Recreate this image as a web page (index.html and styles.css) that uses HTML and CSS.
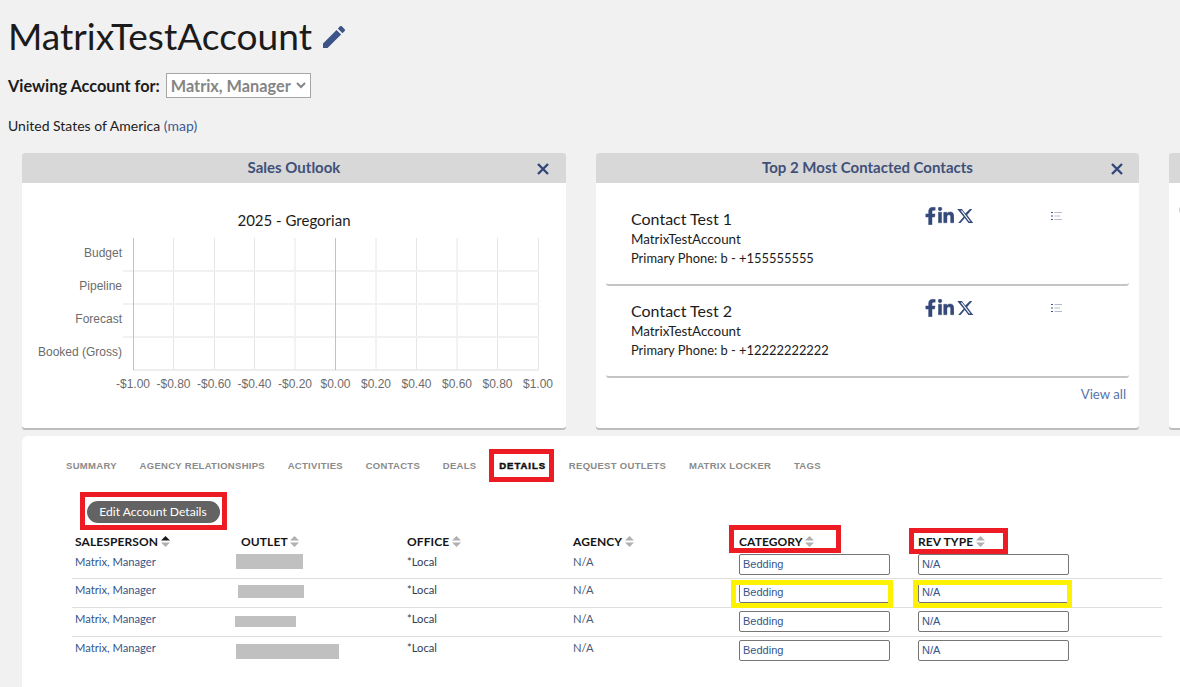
FILE: index.html
```html
<!DOCTYPE html>
<html lang="en">
<head>
<meta charset="utf-8">
<title>MatrixTestAccount</title>
<link rel="stylesheet" href="styles.css">
</head>
<body>
<div class="page">
  <header class="head">
    <div class="title-row">
      <h1 class="title">MatrixTestAccount</h1>
      <svg class="pencil" viewBox="3 3 18 18"><path d="M3 17.25V21h3.75L17.81 9.94l-3.75-3.75L3 17.25zM20.71 7.04c.39-.39.39-1.02 0-1.41l-2.34-2.34c-.39-.39-1.02-.39-1.41 0l-1.83 1.83 3.75 3.75 1.83-1.83z"/></svg>
    </div>
    <div class="viewing">
      <span class="viewing-label">Viewing Account for:</span>
      <div class="fake-select">
        <span>Matrix, Manager</span>
        <svg class="chev" viewBox="0 0 10 7"><path d="M1 1l4 4 4-4"/></svg>
      </div>
    </div>
    <p class="country">United States of America <a class="map">(map)</a></p>
  </header>

  <section class="cards">
    <article class="card">
      <div class="card-head">
        <h2 class="card-title">Sales Outlook</h2>
        <svg class="close" viewBox="0 0 12 12"><path d="M1 1l10 10M11 1L1 11"/></svg>
      </div>
      <svg class="chart" viewBox="0 0 544 246" width="544" height="246">
        <text class="chart-title" x="272" y="43">2025 - Gregorian</text>
        <g class="grid-v">
          <path d="M151.5 55v131M192.5 55v131M232.5 55v131M273 55v131M354 55v131M394.5 55v131M435 55v131M475.5 55v131M516.5 55v131"/>
        </g>
        <g class="grid-h"><path d="M101 88h416M101 121h416M101 154h416"/></g>
        <path class="axis-base" d="M111 187h406"/>
        <path class="axis-zero" d="M111.5 55v132M313.5 55v132"/>
        <g class="cat">
          <text x="100" y="74">Budget</text>
          <text x="100" y="107">Pipeline</text>
          <text x="100" y="140">Forecast</text>
          <text x="100" y="173">Booked (Gross)</text>
        </g>
        <g class="val">
          <text x="111" y="205">-$1.00</text>
          <text x="151.5" y="205">-$0.80</text>
          <text x="192" y="205">-$0.60</text>
          <text x="232.5" y="205">-$0.40</text>
          <text x="273" y="205">-$0.20</text>
          <text x="313.5" y="205">$0.00</text>
          <text x="354" y="205">$0.20</text>
          <text x="394.5" y="205">$0.40</text>
          <text x="435" y="205">$0.60</text>
          <text x="475.5" y="205">$0.80</text>
          <text x="516" y="205">$1.00</text>
        </g>
      </svg>
    </article>

    <article class="card card-contacts">
      <div class="card-head">
        <h2 class="card-title">Top 2 Most Contacted Contacts</h2>
        <svg class="close" viewBox="0 0 12 12"><path d="M1 1l10 10M11 1L1 11"/></svg>
      </div>
      <div class="contacts">
        <div class="contact">
          <div class="contact-info">
            <div class="contact-name">Contact Test 1</div>
            <div class="contact-line">MatrixTestAccount</div>
            <div class="contact-line contact-phone">Primary Phone: b - +155555555</div>
          </div>
          <div class="socials">
            <svg class="ic-f" viewBox="0 0 320 512"><path d="M279.14 288l14.22-92.66h-88.91v-60.13c0-25.35 12.42-50.06 52.24-50.06h40.42V6.26S260.43 0 225.36 0c-73.22 0-121.08 44.38-121.08 124.72v70.62H22.89V288h81.39v224h100.17V288z"/></svg>
            <svg class="ic-in" viewBox="0 0 448 512"><path d="M100.28 448H7.4V148.9h92.88zM53.79 108.1C24.09 108.1 0 83.5 0 53.8a53.79 53.79 0 0 1 107.58 0c0 29.7-24.1 54.3-53.79 54.3zM447.9 448h-92.68V302.4c0-34.7-.7-79.2-48.29-79.2-48.29 0-55.69 37.7-55.69 76.7V448h-92.78V148.9h89.08v40.8h1.3c12.4-23.5 42.69-48.3 87.88-48.3 94 0 111.28 61.9 111.28 142.3V448z"/></svg>
            <svg class="ic-x" viewBox="0 0 512 512"><path d="M389.2 48h70.6L305.6 224.2 487 464H345L233.7 318.6 106.5 464H35.8L200.7 275.5 8.3 48H147.9l101.4 134.4L389.2 48zM364.4 421.8h39.1L151.1 88h-42L364.4 421.8z"/></svg>
          </div>
          <svg class="ic-list" viewBox="0 0 11 8"><path class="dots" d="M0 .5h2M0 4h2M0 7.5h2"/><path class="bars" d="M3.5 .5H11M3.5 4H9M3.5 7.5H11"/></svg>
        </div>
        <div class="contact">
          <div class="contact-info">
            <div class="contact-name">Contact Test 2</div>
            <div class="contact-line">MatrixTestAccount</div>
            <div class="contact-line contact-phone">Primary Phone: b - +12222222222</div>
          </div>
          <div class="socials">
            <svg class="ic-f" viewBox="0 0 320 512"><path d="M279.14 288l14.22-92.66h-88.91v-60.13c0-25.35 12.42-50.06 52.24-50.06h40.42V6.26S260.43 0 225.36 0c-73.22 0-121.08 44.38-121.08 124.72v70.62H22.89V288h81.39v224h100.17V288z"/></svg>
            <svg class="ic-in" viewBox="0 0 448 512"><path d="M100.28 448H7.4V148.9h92.88zM53.79 108.1C24.09 108.1 0 83.5 0 53.8a53.79 53.79 0 0 1 107.58 0c0 29.7-24.1 54.3-53.79 54.3zM447.9 448h-92.68V302.4c0-34.7-.7-79.2-48.29-79.2-48.29 0-55.69 37.7-55.69 76.7V448h-92.78V148.9h89.08v40.8h1.3c12.4-23.5 42.69-48.3 87.88-48.3 94 0 111.28 61.9 111.28 142.3V448z"/></svg>
            <svg class="ic-x" viewBox="0 0 512 512"><path d="M389.2 48h70.6L305.6 224.2 487 464H345L233.7 318.6 106.5 464H35.8L200.7 275.5 8.3 48H147.9l101.4 134.4L389.2 48zM364.4 421.8h39.1L151.1 88h-42L364.4 421.8z"/></svg>
          </div>
          <svg class="ic-list" viewBox="0 0 11 8"><path class="dots" d="M0 .5h2M0 4h2M0 7.5h2"/><path class="bars" d="M3.5 .5H11M3.5 4H9M3.5 7.5H11"/></svg>
        </div>
        <a class="view-all">View all</a>
      </div>
    </article>

    <article class="card card-clipped">
      <div class="card-head"></div>
      <div class="clipped-mark"></div>
    </article>
  </section>

  <section class="panel">
    <nav class="tabs">
      <a class="tab">SUMMARY</a>
      <a class="tab">AGENCY RELATIONSHIPS</a>
      <a class="tab">ACTIVITIES</a>
      <a class="tab">CONTACTS</a>
      <a class="tab">DEALS</a>
      <a class="tab tab-active">DETAILS</a>
      <a class="tab">REQUEST OUTLETS</a>
      <a class="tab">MATRIX LOCKER</a>
      <a class="tab">TAGS</a>
    </nav>
    <button class="edit-btn">Edit Account Details</button>
    <table class="details">
      <colgroup>
        <col class="c-std"><col class="c-std"><col class="c-std"><col class="c-std"><col class="c-cat"><col class="c-rev">
      </colgroup>
      <thead>
        <tr>
          <th>SALESPERSON <svg class="sort sort-on" viewBox="0 0 9 11"><path class="up" d="M4.500 0L9 4.500H0z"/><path class="down" d="M0 6.500h9L4.500 11z"/></svg></th>
          <th>OUTLET <svg class="sort" viewBox="0 0 9 11"><path class="up" d="M4.500 0L9 4.500H0z"/><path class="down" d="M0 6.500h9L4.500 11z"/></svg></th>
          <th>OFFICE <svg class="sort" viewBox="0 0 9 11"><path class="up" d="M4.500 0L9 4.500H0z"/><path class="down" d="M0 6.500h9L4.500 11z"/></svg></th>
          <th>AGENCY <svg class="sort" viewBox="0 0 9 11"><path class="up" d="M4.500 0L9 4.500H0z"/><path class="down" d="M0 6.500h9L4.500 11z"/></svg></th>
          <th>CATEGORY <svg class="sort" viewBox="0 0 9 11"><path class="up" d="M4.500 0L9 4.500H0z"/><path class="down" d="M0 6.500h9L4.500 11z"/></svg></th>
          <th>REV TYPE <svg class="sort" viewBox="0 0 9 11"><path class="up" d="M4.500 0L9 4.500H0z"/><path class="down" d="M0 6.500h9L4.500 11z"/></svg></th>
        </tr>
      </thead>
      <tbody>
        <tr><td class="link">Matrix, Manager</td><td></td><td class="plain">*Local</td><td class="muted">N/A</td><td><input class="field" value="Bedding"></td><td><input class="field" value="N/A"></td></tr>
        <tr><td class="link">Matrix, Manager</td><td></td><td class="plain">*Local</td><td class="muted">N/A</td><td><input class="field" value="Bedding"></td><td><input class="field" value="N/A"></td></tr>
        <tr><td class="link">Matrix, Manager</td><td></td><td class="plain">*Local</td><td class="muted">N/A</td><td><input class="field" value="Bedding"></td><td><input class="field" value="N/A"></td></tr>
        <tr><td class="link">Matrix, Manager</td><td></td><td class="plain">*Local</td><td class="muted">N/A</td><td><input class="field" value="Bedding"></td><td><input class="field" value="N/A"></td></tr>
      </tbody>
    </table>
  </section>

  <div class="redact r1"></div>
  <div class="redact r2"></div>
  <div class="redact r3"></div>
  <div class="redact r4"></div>

  <div class="mark red m-edit"></div>
  <div class="mark red m-details"></div>
  <div class="mark red m-cat"></div>
  <div class="mark red m-rev"></div>
  <div class="mark yellow m-y1"></div>
  <div class="mark yellow m-y2"></div>
</div>
</body>
</html>
```
FILE: styles.css
```css
* { box-sizing: border-box; }
html, body { margin: 0; padding: 0; }
body { background: #f1f1f1; font-family: Lato, "Liberation Sans", sans-serif; color: #1a1a1a; }
.page { position: relative; width: 1180px; height: 687px; overflow: hidden; }

.head { padding: 0 0 0 8px; height: 153px; }
.title-row { display: flex; align-items: center; gap: 11px; height: 72px; }
.title { margin: 0; font-size: 37.100px; font-weight: 400; line-height: 72px; color: #1b1b1b; }
.pencil { width: 22px; height: 22px; fill: #3c5488; margin-top: 2px; }

.viewing { display: flex; align-items: center; gap: 6px; height: 25px; margin-top: 1px; }
.viewing-label { font-size: 16.300px; font-weight: 700; color: #1c1c1c; }
.fake-select { display: flex; align-items: center; justify-content: space-between; width: 145px; height: 25px; padding: 0 4px; background: #fff; border: 1px solid #a6a6a6; font-size: 16.300px; font-weight: 700; color: #858585; }
.chev { width: 10px; height: 7px; fill: none; stroke: #858585; stroke-width: 2; }
.country { margin: 19px 0 0; font-size: 14px; line-height: 18px; color: #1c1c1c; }
.map { color: #3f5b92; }

.cards { display: flex; gap: 30px; padding-left: 22px; height: 277px; }
.card { flex: none; width: 544px; height: 275px; background: #fff; border-radius: 3px; box-shadow: 0 2px 0 #bdbdbd; overflow: hidden; }
.card-contacts { width: 543px; }
.card-clipped { width: 300px; }
.clipped-mark { width: 10px; height: 12px; margin: 21px 0 0 10px; border-left: 1px solid #cfcfcf; border-radius: 6px 0 0 6px; }
.card-head { position: relative; height: 30px; background: #d8d8d8; display: flex; align-items: center; justify-content: center; padding-bottom: 1px; }
.card-title { margin: 0; font-size: 15px; font-weight: 700; color: #3f5078; line-height: 29px; }
.close { position: absolute; right: 17px; top: 10px; width: 12px; height: 12px; fill: none; stroke: #33487a; stroke-width: 2.4; }
.card-contacts .close { right: 16px; }

.chart { display: block; }
.chart-title { font-family: Lato, sans-serif; font-size: 15px; fill: #1c1c1c; text-anchor: middle; }
.grid-v path { stroke: #e6e6e6; stroke-width: 1; fill: none; }
.grid-h path { stroke: #f1f1f1; stroke-width: 2; fill: none; }
.axis-base { stroke: #dcdcdc; stroke-width: 1; fill: none; }
.axis-zero { stroke: #c2c2c2; stroke-width: 1; fill: none; }
.cat text { font-family: "Liberation Sans", sans-serif; font-size: 12px; fill: #6c6c6c; text-anchor: end; }
.val text { font-family: "Liberation Sans", sans-serif; font-size: 12px; fill: #6c6c6c; text-anchor: middle; }

.contacts { padding: 11px 10px 0; }
.contact { display: grid; grid-template-columns: 294px 126px 1fr; height: 92px; border-bottom: 2px solid #c4c4c4; border-radius: 0 0 3px 3px; padding-left: 25px; }
.contact-info { padding-top: 15px; }
.contact-name { font-size: 16px; line-height: 20px; margin-bottom: 1px; color: #1c1c1c; }
.contact-line { font-size: 13.400px; line-height: 19px; color: #1c1c1c; }
.contact-phone { font-size: 12.900px; }
.socials { display: flex; align-items: flex-start; padding-top: 13px; gap: 2px; }
.socials svg { fill: #34497a; }
.ic-f, .ic-in { stroke: #34497a; stroke-width: 12; }
.ic-f { width: 11px; height: 18px; }
.ic-in { width: 16px; height: 18px; }
.ic-x { width: 17px; height: 18px; margin-left: 1px; }
.ic-list { width: 11px; height: 8px; margin-top: 18px; fill: none; }
.dots { stroke: #3c5488; stroke-width: 1; }
.bars { stroke: #b6bccb; stroke-width: 1; }
.view-all { display: block; text-align: right; margin-top: 7px; padding-right: 3px; font-size: 13.200px; line-height: 18px; color: #5574ac; }

.panel { margin-left: 22px; height: 260px; margin-top: 6px; background: #fff; border-radius: 6px 0 0 0; }
.tabs { display: flex; gap: 22.700px; padding: 24px 0 0 44px; height: 42px; align-items: flex-start; }
.tab { font-family: "Liberation Sans", sans-serif; font-size: 9.500px; font-weight: 700; line-height: 12px; letter-spacing: .3px; color: #8b8b8b; }
.tab-active { color: #111; -webkit-text-stroke: .5px #111; letter-spacing: 1px; }
.edit-btn { display: block; margin: 23px 0 0 65px; width: 133px; height: 22px; padding: 0 1px 0 0; border: 0; border-radius: 11px; background: #636363; color: #fff; font-family: Lato, sans-serif; font-size: 12.100px; line-height: 22px; }

.details { margin: 8px 0 0 50px; width: 1090px; table-layout: fixed; border-collapse: collapse; }
.c-std { width: 166px; }
.c-cat { width: 179px; }
.c-rev { width: 247px; }
.details th { padding: 0 3px; height: 20px; text-align: left; font-size: 12px; font-weight: 700; letter-spacing: .1px; color: #151515; vertical-align: middle; white-space: nowrap; }
.details td { padding: 3px 3px 4px; height: 29px; vertical-align: top; font-size: 11.200px; line-height: 16px; }
.details tbody tr:first-child td { height: 27px; padding-top: 3px; padding-bottom: 2px; }
.details tbody tr + tr { border-top: 1px solid #dedede; }
.link { color: #34558b; }
.plain { color: #2f4057; }
.muted { color: #4a5a73; }
.sort { width: 9px; height: 11px; vertical-align: -1px; }
.up, .down { fill: #b0b0b0; }
.sort-on .up { fill: #1a1a1a; }
.field { display: block; width: 151px; height: 21px; padding: 0 3px 1px; border: 1px solid #767676; border-radius: 2px; background: #fff; font-family: "Liberation Sans", sans-serif; font-size: 11px; color: #34558b; outline: 0; }

.redact { position: absolute; background: #c0c0c0; }
.r1 { left: 236px; top: 554px; width: 67px; height: 15px; }
.r2 { left: 238px; top: 585px; width: 66px; height: 13px; }
.r3 { left: 235px; top: 616px; width: 61px; height: 11px; }
.r4 { left: 236px; top: 644px; width: 103px; height: 15px; }

.mark { position: absolute; border-style: solid; border-width: 5px; }
.red { border-color: #ed1c24; }
.yellow { border-color: #fff200; }
.m-edit { left: 80px; top: 492px; width: 147px; height: 38px; }
.m-details { left: 489px; top: 449px; width: 65px; height: 33px; }
.m-cat { left: 729px; top: 525px; width: 112px; height: 28px; }
.m-rev { left: 909px; top: 528px; width: 99px; height: 26px; }
.m-y1 { left: 731px; top: 580px; width: 162px; height: 28px; }
.m-y2 { left: 913px; top: 580px; width: 159px; height: 28px; }
```
